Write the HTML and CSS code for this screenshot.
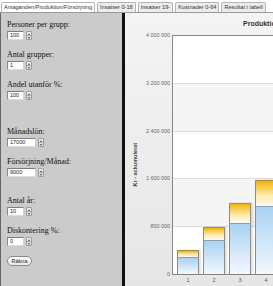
FILE: index.html
```html
<!DOCTYPE html>
<html lang="sv">
<head>
<meta charset="utf-8">
<title>Produktion</title>
<link rel="stylesheet" href="styles.css">
</head>
<body>
<nav class="tabs">
  <div class="tab active">Antaganden/Produktion/Försörjning</div>
  <div class="tab">Insatser 0-18</div>
  <div class="tab">Insatser 19-</div>
  <div class="tab">Kostnader 0-64</div>
  <div class="tab">Resultat i tabell</div>
</nav>
<div class="main">
  <form class="side">
    <div class="field">
      <label>Personer per grupp:</label>
      <div class="num"><span class="box">100</span><span class="spin"><i class="up"></i><i class="dn"></i></span></div>
    </div>
    <div class="field">
      <label>Antal grupper:</label>
      <div class="num"><span class="box">1</span><span class="spin"><i class="up"></i><i class="dn"></i></span></div>
    </div>
    <div class="field">
      <label>Andel utanför %:</label>
      <div class="num"><span class="box">100</span><span class="spin"><i class="up"></i><i class="dn"></i></span></div>
    </div>
    <div class="field sep-lg">
      <label>Månadslön:</label>
      <div class="num"><span class="box wide">17000</span><span class="spin"><i class="up"></i><i class="dn"></i></span></div>
    </div>
    <div class="field">
      <label>Försörjning/Månad:</label>
      <div class="num"><span class="box wide">9000</span><span class="spin"><i class="up"></i><i class="dn"></i></span></div>
    </div>
    <div class="field sep-md">
      <label>Antal år:</label>
      <div class="num"><span class="box">10</span><span class="spin"><i class="up"></i><i class="dn"></i></span></div>
    </div>
    <div class="field">
      <label>Diskontering %:</label>
      <div class="num"><span class="box">0</span><span class="spin"><i class="up"></i><i class="dn"></i></span></div>
    </div>
    <button type="button" class="btn">Räkna</button>
  </form>
  <section class="chart">
    <div class="title">Produktion</div>
    <div class="chart-row">
      <div class="axis-title"><span>Kr - ackumulerat</span></div>
      <div class="ylabels">
        <span>4 000 000</span>
        <span>3 200 000</span>
        <span>2 400 000</span>
        <span>1 600 000</span>
        <span>800 000</span>
        <span>0</span>
      </div>
      <div class="plot-col">
        <div class="plot">
          <div class="bar" style="height:24px"><div class="seg-top"></div><div class="seg-base" style="height:17px"></div></div>
          <div class="bar" style="height:47px"><div class="seg-top"></div><div class="seg-base" style="height:34px"></div></div>
          <div class="bar" style="height:71px"><div class="seg-top"></div><div class="seg-base" style="height:51px"></div></div>
          <div class="bar" style="height:94px"><div class="seg-top"></div><div class="seg-base" style="height:68px"></div></div>
        </div>
        <div class="xlabels">
          <span>1</span><span>2</span><span>3</span><span>4</span>
        </div>
      </div>
    </div>
  </section>
</div>
</body>
</html>
```
FILE: styles.css
```css
* { box-sizing: border-box; }

body {
  margin: 0;
  width: 273px;
  height: 286px;
  overflow: hidden;
  background: #fff;
  font-family: "Liberation Sans", Arial, sans-serif;
}

/* tabs */
.tabs {
  display: flex;
  gap: 2px;
  height: 13px;
  padding: 2px 0 0 1px;
  border-bottom: 1px solid #9a9a9a;
}

.tab {
  height: 10px;
  padding: 0 2px;
  font-size: 5.6px;
  line-height: 9px;
  color: #333;
  white-space: nowrap;
  background: #ececec;
  border: 1px solid #b4b4b4;
  border-bottom: 0;
  border-radius: 2px 2px 0 0;
}

.tab.active { background: #fff; }

/* main */
.main {
  display: flex;
  height: 273px;
}

.side {
  flex: none;
  width: 125px;
  background: #cbcbcb;
  border-left: 1px solid #666;
  border-right: 3px solid #111;
  padding: 7px 0 0 6px;
  margin: 0;
  display: flex;
  flex-direction: column;
  align-items: flex-start;
  gap: 10px;
}

.field label {
  display: block;
  font-family: "Liberation Serif", "Times New Roman", serif;
  font-size: 8px;
  line-height: 10px;
  color: #111;
}

.sep-lg { margin-top: 17px; }
.sep-md { margin-top: 9px; }

.num {
  display: flex;
  gap: 2px;
  height: 9px;
  margin-top: 1px;
}

.box {
  width: 17px;
  height: 9px;
  padding-left: 2px;
  background: #fff;
  border: 1px solid;
  border-color: #7c7c7c #d0d0d0 #dcdcdc #8c8c8c;
  font-size: 5.5px;
  line-height: 7px;
  color: #222;
}

.box.wide { width: 29px; }

.spin {
  width: 6px;
  height: 9px;
  display: flex;
  flex-direction: column;
  background: linear-gradient(#f2f2f2, #d6d6d6);
  border: 1px solid #9c9c9c;
  border-radius: 1px;
}

.spin i {
  flex: 1;
  display: flex;
  align-items: center;
  justify-content: center;
}

.spin .up { border-bottom: 1px solid #a8a8a8; }

.spin .up::before,
.spin .dn::before {
  content: "";
  width: 0;
  height: 0;
  border-left: 1.5px solid transparent;
  border-right: 1.5px solid transparent;
}

.spin .up::before { border-bottom: 2px solid #555; }
.spin .dn::before { border-top: 2px solid #555; }

.btn {
  width: 25px;
  height: 10px;
  padding: 0;
  margin-top: 0;
  border: 1px solid #8a8a8a;
  border-radius: 5px;
  background: linear-gradient(#ffffff, #e6e6e6);
  font-family: "Liberation Sans", Arial, sans-serif;
  font-size: 5.5px;
  line-height: 8px;
  color: #222;
}

/* chart */
.chart {
  flex: 1;
  min-width: 0;
  overflow: hidden;
  background: linear-gradient(#f4f4f4, #e6e6e6);
}

.title {
  height: 22px;
  padding: 6px 0 0 118px;
  font-size: 7px;
  font-weight: bold;
  line-height: 9px;
  color: #333;
  white-space: nowrap;
}

.chart-row {
  display: flex;
  align-items: flex-start;
}

.axis-title {
  flex: none;
  width: 20px;
  padding-top: 108px;
  display: flex;
  justify-content: center;
}

.axis-title span {
  writing-mode: vertical-rl;
  transform: rotate(180deg);
  font-size: 5.5px;
  font-weight: bold;
  line-height: 6px;
  color: #444;
  white-space: nowrap;
}

.ylabels {
  flex: none;
  width: 25px;
  height: 245px;
  margin-top: -3px;
  display: flex;
  flex-direction: column;
  justify-content: space-between;
  align-items: flex-end;
  font-size: 5.4px;
  line-height: 6px;
  color: #666;
  white-space: nowrap;
}

.plot-col {
  flex: none;
  width: 140px;
  margin-left: 2px;
}

.plot {
  height: 240px;
  border-style: solid;
  border-color: #888;
  border-width: 1px 0 1px 1px;
  padding-left: 4px;
  display: flex;
  align-items: flex-end;
  gap: 4px;
  background: linear-gradient(to bottom,
    #fff 0 47px, #dcdcdc 47px 48px,
    #f5f5f5 48px 95px, #dcdcdc 95px 96px,
    #fff 96px 142px, #dcdcdc 142px 143px,
    #f5f5f5 143px 190px, #dcdcdc 190px 191px,
    #fff 191px);
}

.bar {
  flex: none;
  width: 22px;
  display: flex;
  flex-direction: column;
  border: 1px solid #8c8c8c;
  border-bottom: 0;
  box-shadow: 2px 0 2px rgba(0, 0, 0, 0.12);
}

.seg-top {
  flex: 1;
  background: linear-gradient(#f5b400, #ffe9a0 55%, #fffaf0);
}

.seg-base {
  flex: none;
  border-top: 1px solid #9a9a9a;
  background: linear-gradient(#a9d2f3, #f2f8fe);
}

.xlabels {
  display: flex;
  gap: 4px;
  padding: 2px 0 0 5px;
  font-size: 5.5px;
  line-height: 6px;
  color: #555;
}

.xlabels span {
  flex: none;
  width: 22px;
  text-align: center;
}
```
